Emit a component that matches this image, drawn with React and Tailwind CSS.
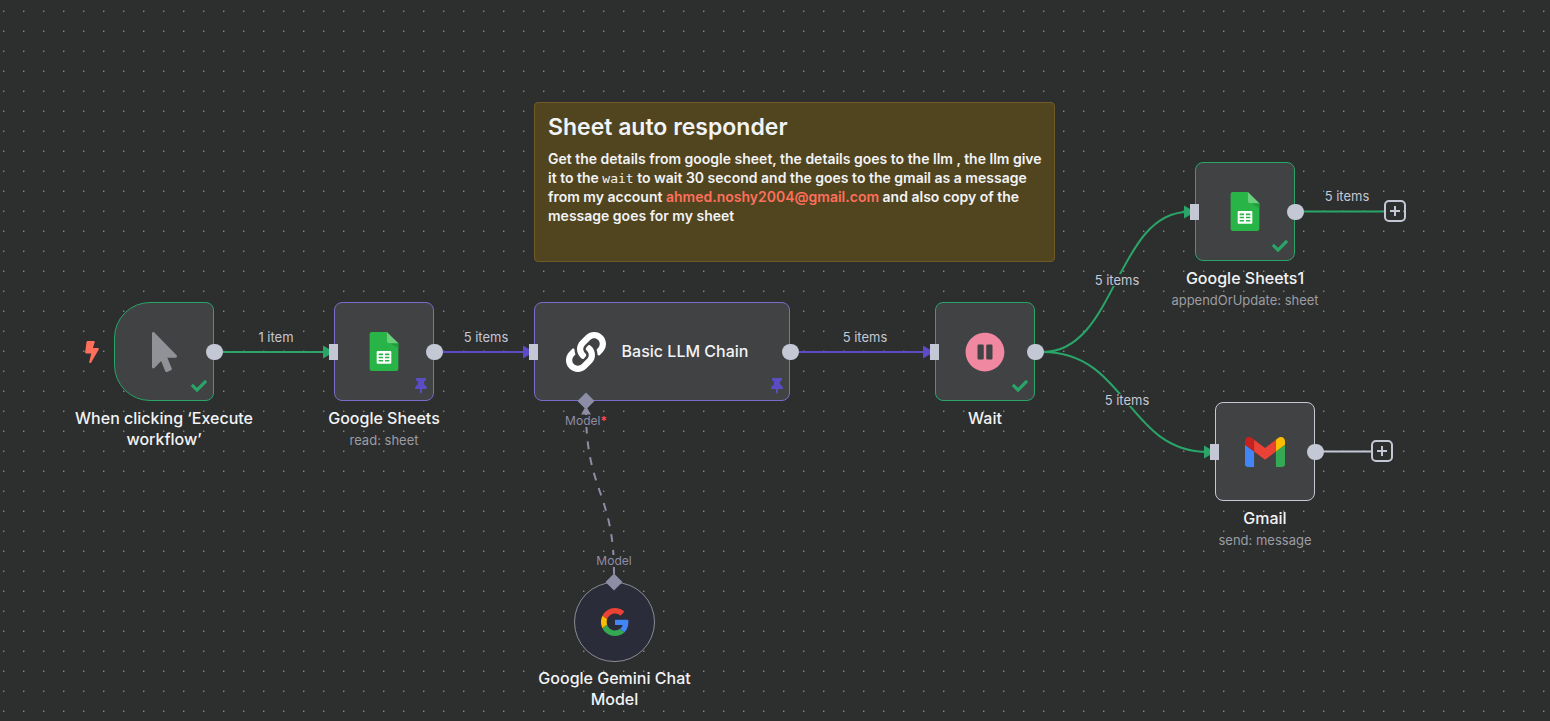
import React from "react";
import { FaBolt, FaCheck, FaLink, FaMousePointer, FaPauseCircle, FaThumbtack } from "react-icons/fa";

function SheetsIcon() {
  return (
    <svg viewBox="0 0 60 80" className="h-[39px] w-[30px]" aria-hidden="true">
      <path fill="#28b446" d="M36 0H5a4.500 4.500 0 0 0-4.500 4.500v71A4.500 4.500 0 0 0 5 80h50a4.500 4.500 0 0 0 4.500-4.500V23L45 14z" />
      <path fill="#219b3c" d="M39.500 21.500 59.500 33V23z" />
      <path fill="#6ace7c" d="M36 0v18.500a4.500 4.500 0 0 0 4.500 4.500h19z" />
      <path
        fill="#fff"
        fillRule="evenodd"
        d="M17 39h26a2 2 0 0 1 2 2v22a2 2 0 0 1-2 2H17a2 2 0 0 1-2-2V41a2 2 0 0 1 2-2zm2 5v3.500h9V44zm13 0v3.500h9V44zM19 51v3h9v-3zm13 0v3h9v-3zM19 57.500v3h9v-3zm13 0v3h9v-3z"
      />
    </svg>
  );
}

function GmailIcon() {
  return (
    <svg viewBox="52 42 88 66" className="h-[30px] w-10" aria-hidden="true">
      <path fill="#4285f4" d="M58 108h14V74L52 59v43c0 3.320 2.690 6 6 6" />
      <path fill="#34a853" d="M120 108h14c3.320 0 6-2.690 6-6V59l-20 15" />
      <path fill="#fbbc04" d="M120 48v26l20-15v-8c0-7.420-8.470-11.650-14.400-7.200" />
      <path fill="#ea4335" d="M72 74V48l24 18 24-18v26L96 92" />
      <path fill="#c5221f" d="M52 51v8l20 15V48l-5.600-4.200c-5.940-4.450-14.400-.220-14.400 7.200" />
    </svg>
  );
}

function GoogleIcon() {
  return (
    <svg viewBox="0 0 48 48" className="size-7" aria-hidden="true">
      <path fill="#ea4335" d="M24 9.500c3.540 0 6.710 1.220 9.210 3.600l6.850-6.850C35.900 2.380 30.470 0 24 0 14.620 0 6.510 5.380 2.560 13.220l7.980 6.190C12.430 13.720 17.740 9.500 24 9.500z" />
      <path fill="#4285f4" d="M46.980 24.550c0-1.570-.150-3.090-.380-4.550H24v9.020h12.940c-.580 2.960-2.260 5.480-4.780 7.180l7.730 6c4.510-4.180 7.090-10.360 7.090-17.650z" />
      <path fill="#fbbc05" d="M10.530 28.590c-.480-1.450-.760-2.990-.760-4.590s.270-3.140.760-4.590l-7.980-6.190C.920 16.460 0 20.120 0 24c0 3.880.920 7.540 2.560 10.780l7.970-6.190z" />
      <path fill="#34a853" d="M24 48c6.480 0 11.930-2.130 15.890-5.810l-7.730-6c-2.150 1.450-4.920 2.300-8.160 2.300-6.260 0-11.570-4.220-13.470-9.910l-7.980 6.190C6.510 42.620 14.620 48 24 48z" />
    </svg>
  );
}

function Node({ place, box, title, subtitle, input, output = true, status, children }) {
  return (
    <article className={`absolute flex flex-col items-center gap-[7px] ${place}`}>
      <div className={`relative flex h-[99px] w-full items-center justify-center border bg-[#414244] ${box}`}>
        {children}
        {input && <span className="absolute top-[41px] -left-[6px] h-4 w-[9px] bg-[#c4c8d5]" />}
        {output && <span className="absolute top-[41px] -right-[10px] h-4 w-[17px] rounded-full bg-[#c4c8d5]" />}
        {status === "success" && <FaCheck className="absolute right-1.5 bottom-1.5 size-4 text-[#29a568]" />}
        {status === "pinned" && <FaThumbtack className="absolute right-1.5 bottom-1.5 h-4 w-3 text-[#5b4bc4]" />}
      </div>
      {title && <NodeLabel title={title} subtitle={subtitle} />}
    </article>
  );
}

function NodeLabel({ title, subtitle }) {
  return (
    <div className="w-[190px] text-center">
      <h2 className="text-[16px] leading-[21px] font-medium text-[#f2f3f5]">{title}</h2>
      {subtitle && <p className="mt-0.5 text-[13px] leading-[18px] text-[#9b9da3]">{subtitle}</p>}
    </div>
  );
}

function EdgeLabel({ place, children }) {
  return (
    <span className={`absolute -translate-x-1/2 bg-[#2d2e2e] text-[13px] leading-3 whitespace-nowrap text-[#c4c8d5] ${place}`}>
      {children}
    </span>
  );
}

function PortLabel({ place, children }) {
  return (
    <span className={`absolute -translate-x-1/2 bg-[#2d2e2e] text-[12px] leading-3 whitespace-nowrap text-[#8d8da6] ${place}`}>
      {children}
    </span>
  );
}

function AddButton({ place }) {
  return (
    <button
      type="button"
      aria-label="Add node"
      className={`absolute flex size-[22px] items-center justify-center rounded-[5px] border-2 border-[#c4c8d5] text-[#c4c8d5] ${place}`}
    >
      <svg viewBox="0 0 10 10" className="size-2.5" aria-hidden="true">
        <path d="M5 0v10M0 5h10" stroke="currentColor" strokeWidth="2" />
      </svg>
    </button>
  );
}

function Edges() {
  return (
    <svg className="absolute inset-0 h-full w-full" fill="none" strokeWidth="2" aria-hidden="true">
      <defs>
        <pattern id="dots" width="20" height="20" patternUnits="userSpaceOnUse">
          <circle cx="3.800" cy="11.300" r="0.700" fill="#a0a1a3" />
        </pattern>
      </defs>
      <rect width="100%" height="100%" fill="url(#dots)" />
      <g stroke="#29a568">
        <path d="M222 352H326" />
        <path d="M1043 352C1116 352 1116 212 1188 212" />
        <path d="M1043 352C1127 352 1127 452 1208 452" />
        <path d="M1302 211.500H1385" />
      </g>
      <g stroke="#5b4bc4">
        <path d="M442 352H526" />
        <path d="M798 352H927" />
      </g>
      <path d="M1322 451.500H1372" stroke="#c4c8d5" />
      <path d="M614 574C614 492 586 492 586 410" stroke="#8d8da6" strokeDasharray="8 8" />
      <path d="M581 414.500h10L586 406z" fill="#8d8da6" />
      <g fill="#29a568">
        <path d="M323 345.500v13l11-6.500z" />
        <path d="M1184 205.500v13l11-6.500z" />
        <path d="M1204 445.500v13l11-6.500z" />
      </g>
      <g fill="#5b4bc4">
        <path d="M523 345.500v13l11-6.500z" />
        <path d="M923 345.500v13l11-6.500z" />
      </g>
    </svg>
  );
}

export default function App() {
  return (
    <main className="relative min-h-screen overflow-hidden bg-[#2d2e2e] font-['Inter',sans-serif]">
      <Edges />

      <section className="absolute top-[102px] left-[534px] h-[160px] w-[521px] rounded-[4px] border border-[#705b27] bg-[#514520] py-[9px] pr-2 pl-[13px] text-[#f2f3f5]">
        <h1 className="text-[23px] leading-[30px] font-semibold">Sheet auto responder</h1>
        <p className="mt-[7px] text-[14px] leading-[19px] font-semibold">
          Get the details from google sheet, the details goes to the llm , the llm give it to the{" "}
          <code className="font-['DejaVu_Sans_Mono',monospace] text-[13px] leading-none font-normal">wait</code> to wait 30 second
          and the goes to the gmail as a message from my account{" "}
          <a href="mailto:ahmed.noshy2004@gmail.com" className="text-[#ff6f5c]">
            ahmed.noshy2004@gmail.com
          </a>{" "}
          and also copy of the message goes for my sheet
        </p>
      </section>

      <FaBolt className="absolute top-[341px] left-[85px] h-[22px] w-3.5 text-[#ff6f5c]" />
      <Node
        place="top-[302px] left-[114px] w-[100px]"
        box="rounded-l-[36px] rounded-r-lg border-[#29a568]"
        title="When clicking ‘Execute workflow’"
        status="success"
      >
        <FaMousePointer className="h-10 w-[25px] text-[#909298]" />
      </Node>
      <Node
        place="top-[302px] left-[334px] w-[100px]"
        box="rounded-lg border-[#7b6cc9]"
        title="Google Sheets"
        subtitle="read: sheet"
        status="pinned"
        input
      >
        <SheetsIcon />
      </Node>
      <Node
        place="top-[302px] left-[534px] w-[256px]"
        box="gap-4 rounded-lg border-[#7b6cc9] pr-2.5"
        status="pinned"
        input
      >
        <FaLink className="size-10 text-white" />
        <h2 className="text-[16px] leading-[21px] font-medium whitespace-nowrap text-[#f2f3f5]">Basic LLM Chain</h2>
        <span className="absolute -bottom-[7px] left-[45px] size-3 rotate-45 bg-[#8d8da6]" />
      </Node>
      <Node
        place="top-[302px] left-[935px] w-[100px]"
        box="rounded-lg border-[#29a568]"
        title="Wait"
        status="success"
        input
      >
        <FaPauseCircle className="size-10 text-[#f188a2]" />
      </Node>
      <Node
        place="top-[162px] left-[1195px] w-[100px]"
        box="rounded-lg border-[#29a568]"
        title="Google Sheets1"
        subtitle="appendOrUpdate: sheet"
        status="success"
        input
      >
        <SheetsIcon />
      </Node>
      <Node
        place="top-[402px] left-[1215px] w-[100px]"
        box="rounded-lg border-[#c4c8d5]"
        title="Gmail"
        subtitle="send: message"
        input
      >
        <GmailIcon />
      </Node>

      <article className="absolute top-[582px] left-[574px] flex w-[81px] flex-col items-center gap-1.5">
        <div className="relative flex h-[80px] w-full items-center justify-center rounded-full border border-[#8b8c94] bg-[#2b2c3a]">
          <GoogleIcon />
          <span className="absolute -top-[7px] left-[33px] size-3 rotate-45 bg-[#8d8da6]" />
        </div>
        <NodeLabel title="Google Gemini Chat Model" />
      </article>

      <EdgeLabel place="top-[331px] left-[276px]">1 item</EdgeLabel>
      <EdgeLabel place="top-[331px] left-[486px]">5 items</EdgeLabel>
      <EdgeLabel place="top-[331px] left-[865px]">5 items</EdgeLabel>
      <EdgeLabel place="top-[274px] left-[1117px]">5 items</EdgeLabel>
      <EdgeLabel place="top-[394px] left-[1127px]">5 items</EdgeLabel>
      <EdgeLabel place="top-[190px] left-[1347px]">5 items</EdgeLabel>
      <PortLabel place="top-[415px] left-[586px]">
        Model<span className="font-semibold text-[#ff4d55]">*</span>
      </PortLabel>
      <PortLabel place="top-[555px] left-[614px]">Model</PortLabel>

      <AddButton place="top-[200px] left-[1384px]" />
      <AddButton place="top-[440px] left-[1371px]" />
    </main>
  );
}
